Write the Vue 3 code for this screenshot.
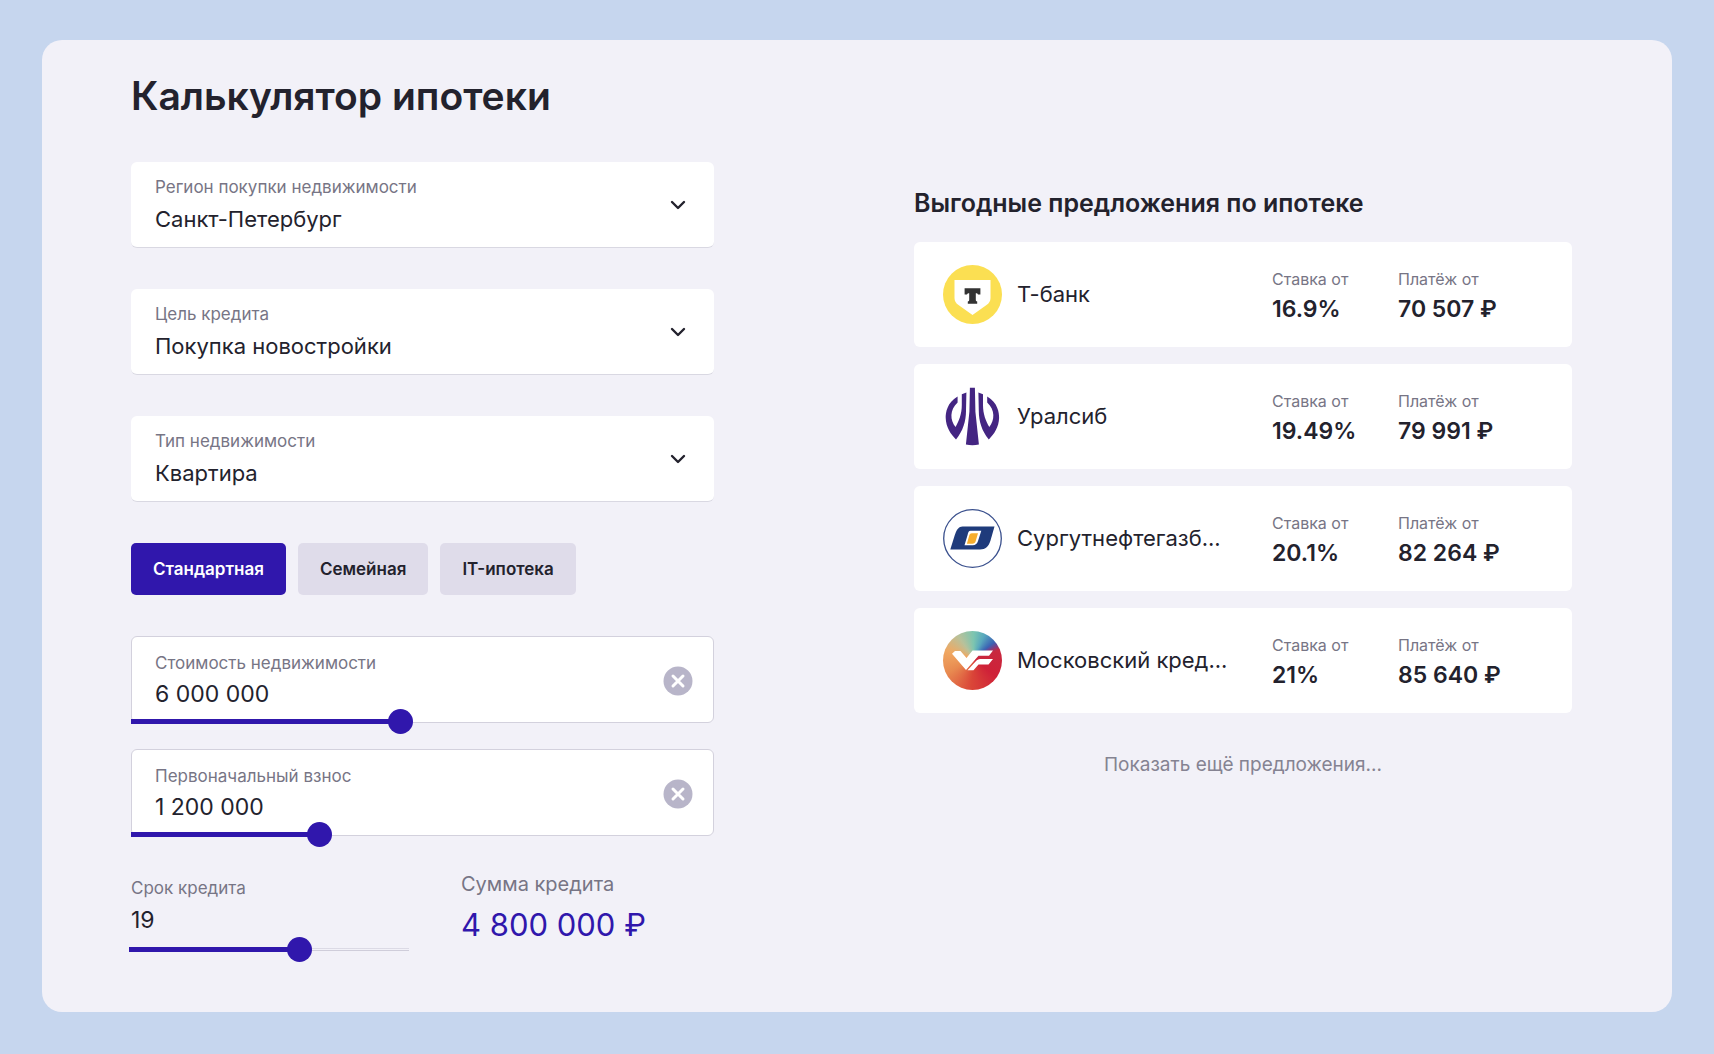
<script setup>
import { computed, reactive, ref } from 'vue'

const selects = reactive([
  { id: 'region', label: 'Регион покупки недвижимости', value: 'Санкт-Петербург', options: ['Санкт-Петербург', 'Москва'] },
  { id: 'purpose', label: 'Цель кредита', value: 'Покупка новостройки', options: ['Покупка новостройки', 'Вторичное жильё'] },
  { id: 'kind', label: 'Тип недвижимости', value: 'Квартира', options: ['Квартира', 'Дом'] },
])

const programs = ['Стандартная', 'Семейная', 'IT-ипотека']
const program = ref('Стандартная')

const amounts = reactive([
  { id: 'price', label: 'Стоимость недвижимости', value: 6000000, min: 500000, max: 12440000 },
  { id: 'deposit', label: 'Первоначальный взнос', value: 1200000, min: 0, max: 3800000 },
])
const term = reactive({ value: 19, min: 1, max: 30 })

const offers = [
  { id: 'tbank', name: 'Т-банк', rate: '16.9%', payment: 70507 },
  { id: 'uralsib', name: 'Уралсиб', rate: '19.49%', payment: 79991 },
  { id: 'sngb', name: 'Сургутнефтегазб...', rate: '20.1%', payment: 82264 },
  { id: 'mkb', name: 'Московский кред...', rate: '21%', payment: 85640 },
]

const loan = computed(() => Math.max(0, amounts[0].value - amounts[1].value))

function format(n) {
  return String(n).replace(/\B(?=(\d{3})+$)/g, ' ')
}
function parse(text) {
  return Number(text.replace(/\D/g, ''))
}
function filled(s) {
  const part = (s.value - s.min) / (s.max - s.min)
  return { '--filled': Math.min(100, Math.max(0, part * 100)) + '%' }
}
</script>

<template>
  <main class="panel">
    <h1>Калькулятор ипотеки</h1>
    <div class="columns">
      <form class="calculator" @submit.prevent>
        <div v-for="s in selects" :key="s.id" class="field select-field">
          <label :for="s.id">{{ s.label }}</label>
          <select :id="s.id" v-model="s.value">
            <option v-for="o in s.options" :key="o">{{ o }}</option>
          </select>
          <svg class="chevron" viewBox="0 0 16 10" aria-hidden="true">
            <path d="M2 2l6 6 6-6" fill="none" stroke="currentColor" stroke-width="2.4" stroke-linecap="round" stroke-linejoin="round" />
          </svg>
        </div>

        <div class="programs">
          <button v-for="p in programs" :key="p" type="button" :class="{ active: p === program }" @click="program = p">{{ p }}</button>
        </div>

        <div class="amounts">
          <div v-for="a in amounts" :key="a.id" class="field amount-field">
            <div class="entry">
              <label :for="a.id">{{ a.label }}</label>
              <input :id="a.id" type="text" inputmode="numeric" :value="format(a.value)" @change="a.value = parse($event.target.value)" />
            </div>
            <button class="clear" type="button" aria-label="Очистить" @click="a.value = a.min">
              <svg viewBox="0 0 30 30" aria-hidden="true">
                <circle cx="15" cy="15" r="14.5" fill="#b8b5c9" />
                <path d="M10 10l10 10M20 10L10 20" stroke="#fff" stroke-width="3" stroke-linecap="round" />
              </svg>
            </button>
            <input v-model.number="a.value" class="slider" type="range" :aria-label="a.label" :min="a.min" :max="a.max" step="10000" :style="filled(a)" />
          </div>
        </div>

        <div class="summary">
          <div class="term">
            <label for="term">Срок кредита</label>
            <input id="term" v-model.number="term.value" type="text" inputmode="numeric" />
            <input v-model.number="term.value" class="slider ruled" type="range" aria-label="Срок кредита" :min="term.min" :max="term.max" :style="filled(term)" />
          </div>
          <div class="loan">
            <span class="loan-label">Сумма кредита</span>
            <output>{{ format(loan) }} ₽</output>
          </div>
        </div>
      </form>

      <section class="offers">
        <h2>Выгодные предложения по ипотеке</h2>
        <ul>
          <li v-for="o in offers" :key="o.id">
            <svg v-if="o.id === 'tbank'" class="logo" viewBox="0 0 59 59" aria-hidden="true">
              <circle cx="29.5" cy="29.5" r="29.5" fill="#fbdf52" />
              <path d="M11.5 15h36v18c0 3-1.500 5.500-4 7L29.500 50 15.500 40c-2.500-1.500-4-4-4-7z" fill="#fff" />
              <path d="M21.600 23.200h15.800v6.300h-2.400c-.3-.9-.9-1.300-2.200-1.300v6.500c0 1.200.4 1.600 1.400 1.800v2.200h-9.400v-2.200c1-.2 1.400-.6 1.400-1.800v-6.500c-1.300 0-1.900.4-2.200 1.300h-2.400z" fill="#333" />
            </svg>
            <svg v-else-if="o.id === 'uralsib'" class="logo" viewBox="0 0 59 59" aria-hidden="true">
              <g fill="#442582">
                <path d="M26.900.8h5l.5 24L35.900 57.500q-6.500 1.400-13 0L26.400 24.800z" />
                <path d="M23.400 5.600L18.800 7.200V18C18.800 27 16 34 12.500 40 7 33 6.500 23 14.600 15.500V9.500C4 15.500 2.500 26 2.700 31 3 40 7.500 47 13 52.500 20 44 23 34 23 24z" />
                <path d="M35.400 5.600L40 7.200V18C40 27 42.800 34 46.300 40 51.800 33 52.300 23 44.200 15.500V9.500C54.800 15.500 56.300 26 56.100 31 55.800 40 51.300 47 45.800 52.500 38.800 44 35.800 34 35.800 24z" />
              </g>
            </svg>
            <svg v-else-if="o.id === 'sngb'" class="logo" viewBox="0 0 59 59" aria-hidden="true">
              <circle cx="29.500" cy="29.500" r="28.800" fill="#fff" stroke="#3a508d" stroke-width="1.300" />
              <path d="M19.500 17.500h32l-4 14C45.700 37.500 42.500 40.500 37 40.500H7.300l4.700-15c1.600-5 3.800-8 7.500-8z" fill="#1f3b7b" />
              <path d="M27.500 21.800h10.800l-3.200 10c-.9 3-2.500 4.400-5.400 4.400h-8.200l3-10c.9-3.200 1.200-4.400 3-4.400z" fill="#fff" />
              <path d="M29 24.300h6l-2.200 7.400c-.6 2.200-1.600 3-3.500 3h-5.400l2.100-7.400c.5-2 1.200-3 3-3z" fill="#f7ae2d" />
            </svg>
            <svg v-else class="logo mkb" viewBox="0 0 59 59" aria-hidden="true">
              <path d="M12 20H17.500L23.500 27 29.500 19.500H50L46 24.800H35.500L23 39 9 22.800z" fill="#fff" />
              <path d="M37 28H50L45.500 33.500H35.500L30.500 39.300H24.500L33.500 29.500Q35 28 37 28z" fill="#fff" />
            </svg>
            <span class="bank">{{ o.name }}</span>
            <dl class="rate">
              <dt>Ставка от</dt>
              <dd>{{ o.rate }}</dd>
            </dl>
            <dl class="payment">
              <dt>Платёж от</dt>
              <dd>{{ format(o.payment) }} ₽</dd>
            </dl>
          </li>
        </ul>
        <button class="more" type="button">Показать ещё предложения...</button>
      </section>
    </div>
  </main>
</template>

<style>
body {
  margin: 0;
  background: #c6d6ee;
}
</style>

<style scoped>
.panel {
  box-sizing: border-box;
  margin: 40px 42px;
  padding: 32px 100px 50px 89px;
  border-radius: 20px;
  background: #f2f1f8;
  color: #23222d;
  font-family: Inter, "Liberation Sans", sans-serif;
  font-size: 22px;
  line-height: 28px;
}

h1 {
  margin: 0 0 42px;
  font-size: 39px;
  line-height: 48px;
  font-weight: 600;
}

.columns {
  display: grid;
  grid-template-columns: minmax(0, 583fr) minmax(0, 658fr);
  column-gap: 200px;
  align-items: start;
}

input,
select,
button {
  margin: 0;
  padding: 0;
  border: 0;
  border-radius: 0;
  background: none;
  color: inherit;
  font: inherit;
}

button {
  cursor: pointer;
}

label,
dt {
  color: #777585;
  line-height: 24px;
}

label {
  font-size: 17px;
}

dt {
  font-size: 16px;
}

.calculator {
  display: flex;
  flex-direction: column;
  gap: 41px;
}

.field {
  position: relative;
  box-sizing: border-box;
  border-radius: 6px;
  background: #fff;
}

.select-field {
  display: grid;
  row-gap: 4px;
  padding: 13px 24px 12px;
  border-bottom: 1px solid #d9d8e2;
}

select {
  appearance: none;
  width: 100%;
  height: 32px;
  line-height: 32px;
}

.chevron {
  position: absolute;
  top: 50%;
  right: 28px;
  width: 16px;
  height: 10px;
  margin-top: -5px;
  pointer-events: none;
}

.programs {
  display: flex;
  gap: 12px;
}

.programs button {
  padding: 0 22px;
  border-radius: 5px;
  background: #dfdcea;
  font-size: 17px;
  font-weight: 600;
  line-height: 52px;
}

.programs .active {
  background: #3017ac;
  color: #fff;
}

.amounts {
  display: flex;
  flex-direction: column;
  gap: 26px;
}

.amount-field {
  display: flex;
  align-items: center;
  padding: 14px 20px 12px 23px;
  border: 1px solid #d3d1dd;
}

.entry {
  display: grid;
  flex: 1;
  row-gap: 3px;
}

.entry input,
.term input[type='text'] {
  width: 100%;
  height: 32px;
  font-size: 23px;
  line-height: 32px;
}

.clear {
  width: 30px;
  height: 30px;
}

.clear svg {
  display: block;
}

.slider {
  appearance: none;
  height: 25px;
  background: linear-gradient(#3017ac, #3017ac) left center / var(--filled) 5px no-repeat;
}

.slider::-webkit-slider-thumb {
  appearance: none;
  width: 25px;
  height: 25px;
  border-radius: 50%;
  background: #3017ac;
}

.amount-field .slider {
  position: absolute;
  left: -1px;
  bottom: -12px;
  width: calc(100% + 2px);
}

.summary {
  display: grid;
  grid-template-columns: 280px 1fr;
  column-gap: 50px;
  margin-top: -5px;
}

.term {
  display: grid;
  padding-top: 4px;
}

.term input[type='text'] {
  margin: 4px 0 1px;
}

.term .slider {
  width: 100%;
  margin-left: -2px;
}

.term .ruled {
  background:
    linear-gradient(#3017ac, #3017ac) left center / var(--filled) 5px no-repeat,
    linear-gradient(#cfcdda, #e8e7f0 1px, #f2f1f8 1px, #f2f1f8 2px, #cfcdda 2px) left center / 100% 3px no-repeat;
}

.loan {
  display: grid;
  align-content: start;
  gap: 9px;
}

.loan-label {
  color: #777585;
  font-size: 20px;
  line-height: 24px;
}

output {
  color: #3017ac;
  font-size: 31px;
  line-height: 40px;
}

.offers {
  padding-top: 26px;
}

h2 {
  margin: 0 0 24px;
  font-size: 25px;
  line-height: 30px;
  font-weight: 600;
}

ul {
  display: grid;
  gap: 17px;
  margin: 0;
  padding: 0;
  list-style: none;
}

li {
  display: grid;
  grid-template-columns: 59px minmax(0, 1fr) 111px 146px;
  align-items: center;
  column-gap: 15px;
  box-sizing: border-box;
  min-height: 105px;
  padding: 0 28px 0 29px;
  border-radius: 6px;
  background: #fff;
}

.logo {
  display: block;
  width: 59px;
  height: 59px;
}

.mkb {
  border-radius: 50%;
  background: conic-gradient(from 0deg at 52% 46%, #7cc5b0, #58a8bd 25deg, #3b62b4 52deg, #7a3f86 62deg, #c8283f 72deg, #cf2138 130deg, #da4638 185deg, #e88a50 240deg, #f0a862 285deg, #b9c19a 325deg, #7cc5b0);
}

.bank {
  overflow: hidden;
  padding-bottom: 2px;
  text-overflow: ellipsis;
  white-space: nowrap;
}

dl,
dd {
  margin: 0;
}

dl {
  padding-top: 3px;
  white-space: nowrap;
}

dd {
  padding-top: 2px;
  font-size: 23px;
  font-weight: 600;
  line-height: 32px;
}

.more {
  display: block;
  margin: 38px auto 0;
  color: #858392;
  font-size: 19px;
  line-height: 28px;
}

@media (max-width: 1200px) {
  .panel {
    margin: 20px;
    padding: 32px;
  }

  .columns {
    grid-template-columns: minmax(0, 1fr);
  }
}
</style>
